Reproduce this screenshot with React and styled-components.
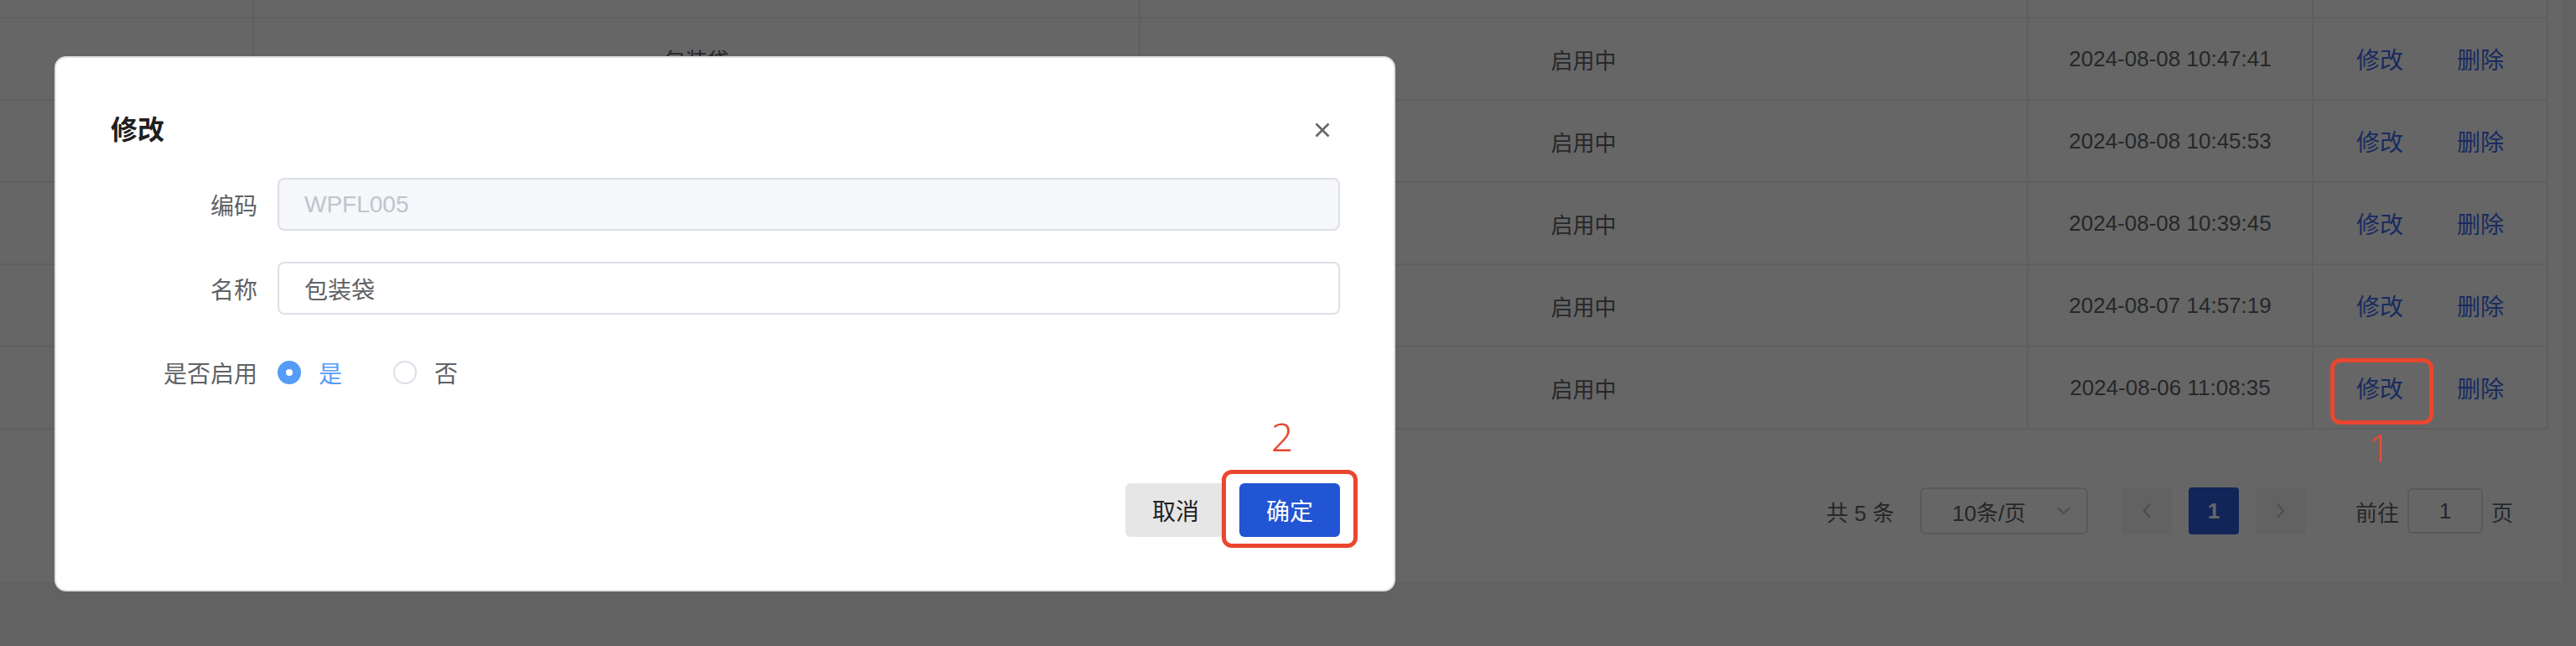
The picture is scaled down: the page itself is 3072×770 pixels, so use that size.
import React from 'react'
import styled, { createGlobalStyle } from 'styled-components'

const GlobalStyle = createGlobalStyle`
  html, body {
    margin: 0;
    padding: 0;
  }
  body {
    width: 3072px;
    height: 770px;
    overflow: hidden;
    background: #f5f5f5;
    font-family: "Liberation Sans", "Noto Sans CJK SC", sans-serif;
  }
`

const columns = [303, 1057, 1059, 340, 280]

const rows = [
    { name: '包装袋', status: '启用中', time: '2024-08-08 10:47:41' },
    { name: '纸箱', status: '启用中', time: '2024-08-08 10:45:53' },
    { name: '托盘', status: '启用中', time: '2024-08-08 10:39:45' },
    { name: '缠绕膜', status: '启用中', time: '2024-08-07 14:57:19' },
    { name: '标签', status: '启用中', time: '2024-08-06 11:08:35' },
]

function App() {
    return (
        <Page>
            <GlobalStyle />
            <Card>
                <Table>
                    <HeadStrip>
                        {columns.map((w, i) => <Cell key={i} w={w} />)}
                    </HeadStrip>
                    {rows.map(row => (
                        <Row key={row.time}>
                            <Cell w={columns[0]} />
                            <Cell w={columns[1]}>{row.name}</Cell>
                            <Cell w={columns[2]}>{row.status}</Cell>
                            <Cell w={columns[3]}>{row.time}</Cell>
                            <Cell w={columns[4]}>
                                <Actions>
                                    <LinkBtn>修改</LinkBtn>
                                    <LinkBtn>删除</LinkBtn>
                                </Actions>
                            </Cell>
                        </Row>
                    ))}
                </Table>
                <Pager>
                    <Total>共 5 条</Total>
                    <SizeSelect>
                        <span>10条/页</span>
                        <svg width="18" height="12" viewBox="0 0 18 12">
                            <path d="M2 2 L9 9 L16 2" fill="none" stroke="#c0c4cc" strokeWidth="2" />
                        </svg>
                    </SizeSelect>
                    <PageNav>
                        <PageBtn>
                            <svg width="14" height="22" viewBox="0 0 14 22">
                                <path d="M11 3 L4 11 L11 19" fill="none" stroke="#c0c4cc" strokeWidth="2.4" />
                            </svg>
                        </PageBtn>
                        <PageBtn active>1</PageBtn>
                        <PageBtn>
                            <svg width="14" height="22" viewBox="0 0 14 22">
                                <path d="M3 3 L10 11 L3 19" fill="none" stroke="#c0c4cc" strokeWidth="2.4" />
                            </svg>
                        </PageBtn>
                    </PageNav>
                    <Jumper>
                        前往
                        <JumpInput>1</JumpInput>
                        页
                    </Jumper>
                </Pager>
            </Card>

            <Mask />

            <Dialog>
                <DialogHeader>
                    <DialogTitle>修改</DialogTitle>
                    <CloseBtn>
                        <svg width="18" height="18" viewBox="0 0 18 18">
                            <path d="M1.5 1.5 L16.5 16.5 M16.5 1.5 L1.5 16.5" stroke="#666" strokeWidth="2.6" />
                        </svg>
                    </CloseBtn>
                </DialogHeader>
                <DialogBody>
                    <FormRow>
                        <Label>编码</Label>
                        <Input disabled>WPFL005</Input>
                    </FormRow>
                    <FormRow>
                        <Label>名称</Label>
                        <Input>包装袋</Input>
                    </FormRow>
                    <FormRow>
                        <Label>是否启用</Label>
                        <RadioGroup>
                            <Radio>
                                <RadioDot checked />
                                <RadioText checked>是</RadioText>
                            </Radio>
                            <Radio>
                                <RadioDot />
                                <RadioText>否</RadioText>
                            </Radio>
                        </RadioGroup>
                    </FormRow>
                </DialogBody>
                <DialogFooter>
                    <Button>取消</Button>
                    <Button primary>确定</Button>
                </DialogFooter>
            </Dialog>

            <MarkBox style={{ left: 2779, top: 427, width: 123, height: 79 }} />
            <MarkNum style={{ left: 2824, top: 510 }}>1</MarkNum>
            <MarkBox style={{ left: 1457, top: 560, width: 162, height: 93 }} />
            <MarkNum style={{ left: 1516, top: 497 }}>2</MarkNum>
        </Page>
    )
}

export default App

const Page = styled.div`
    position: relative;
    width: 3072px;
    height: 770px;
    overflow: hidden;
    background: #f5f5f5;
`

const Card = styled.div`
    width: 3056px;
    background: #fff;
    padding-bottom: 56px;
`

const Table = styled.div`
    width: 3039px;
    color: #606266;
    font-size: 26px;
`

const HeadStrip = styled.div`
    display: flex;
    height: 20px;
    border-bottom: 2px solid #ebeef5;
`

const Row = styled.div`
    display: flex;
    height: 96px;
    border-bottom: 2px solid #ebeef5;
`

const Cell = styled.div`
    width: ${props => props.w}px;
    flex: none;
    box-sizing: border-box;
    border-right: 2px solid #ebeef5;
    display: flex;
    align-items: center;
    justify-content: center;
    white-space: nowrap;
`

const Actions = styled.div`
    display: flex;
    gap: 64px;
`

const LinkBtn = styled.span`
    font-size: 28px;
    color: #3d6cf0;
`

const Pager = styled.div`
    width: 3039px;
    margin-top: 69px;
    height: 56px;
    box-sizing: border-box;
    padding-right: 42px;
    display: flex;
    justify-content: flex-end;
    align-items: center;
    font-size: 26px;
    color: #606266;
`

const Total = styled.span`
    margin-right: 31px;
`

const SizeSelect = styled.div`
    width: 200px;
    height: 56px;
    box-sizing: border-box;
    border: 2px solid #dcdfe6;
    border-radius: 6px;
    display: flex;
    align-items: center;
    justify-content: space-between;
    padding: 0 18px 0 36px;
    margin-right: 40px;
`

const PageNav = styled.div`
    display: flex;
    gap: 20px;
    margin-right: 59px;
`

const PageBtn = styled.div`
    width: 60px;
    height: 56px;
    border-radius: 4px;
    display: flex;
    align-items: center;
    justify-content: center;
    background: ${props => props.active ? '#2f5edf' : '#f4f4f5'};
    color: #fff;
    font-weight: bold;
`

const Jumper = styled.div`
    display: flex;
    align-items: center;
    gap: 10px;
`

const JumpInput = styled.div`
    width: 90px;
    height: 54px;
    box-sizing: border-box;
    border: 2px solid #dcdfe6;
    border-radius: 6px;
    display: flex;
    align-items: center;
    justify-content: center;
`

const Mask = styled.div`
    position: absolute;
    inset: 0;
    background: rgba(0, 0, 0, 0.6);
`

const Dialog = styled.div`
    position: absolute;
    left: 65px;
    top: 67px;
    width: 1599px;
    box-sizing: border-box;
    background: #fff;
    border: 2px solid #e2e2e2;
    border-radius: 14px;
`

const DialogHeader = styled.div`
    display: flex;
    align-items: center;
    justify-content: space-between;
    padding: 62px 76px 0 65px;
`

const DialogTitle = styled.div`
    font-size: 32px;
    line-height: 48px;
    font-weight: bold;
    color: #1f1f1f;
`

const CloseBtn = styled.div`
    width: 18px;
    height: 18px;
    display: flex;
`

const DialogBody = styled.div`
    padding: 33px 64px 0 64px;
`

const FormRow = styled.div`
    display: flex;
    align-items: center;
    height: 63px;
    margin-bottom: 37px;
`

const Label = styled.div`
    width: 200px;
    flex: none;
    box-sizing: border-box;
    padding-right: 24px;
    text-align: right;
    font-size: 28px;
    color: #606266;
`

const Input = styled.div`
    flex: 1;
    height: 63px;
    box-sizing: border-box;
    border: 2px solid #dcdfe6;
    border-radius: 8px;
    padding: 0 30px;
    display: flex;
    align-items: center;
    font-size: 28px;
    background: ${props => props.disabled ? '#f5f7fa' : '#fff'};
    color: ${props => props.disabled ? '#c0c4cc' : '#606266'};
`

const RadioGroup = styled.div`
    display: flex;
    align-items: center;
    gap: 61px;
`

const Radio = styled.div`
    display: flex;
    align-items: center;
    gap: 21px;
`

const RadioDot = styled.span`
    width: 28px;
    height: 28px;
    box-sizing: border-box;
    border-radius: 50%;
    border: 2px solid ${props => props.checked ? '#559cf8' : '#dcdfe6'};
    background: ${props => props.checked ? '#559cf8' : '#fff'};
    display: flex;
    align-items: center;
    justify-content: center;
    &::after {
        content: '';
        width: 8px;
        height: 8px;
        border-radius: 50%;
        background: #fff;
        display: ${props => props.checked ? 'block' : 'none'};
    }
`

const RadioText = styled.span`
    font-size: 28px;
    color: ${props => props.checked ? '#559cf8' : '#606266'};
`

const DialogFooter = styled.div`
    display: flex;
    justify-content: flex-end;
    gap: 16px;
    padding: 64px 64px 63px 0;
`

const Button = styled.div`
    width: 120px;
    height: 64px;
    border-radius: 6px;
    display: flex;
    align-items: center;
    justify-content: center;
    font-size: 28px;
    background: ${props => props.primary ? '#2255d4' : '#e6e6e6'};
    color: ${props => props.primary ? '#fff' : '#222'};
`

const MarkBox = styled.div`
    position: absolute;
    box-sizing: border-box;
    border: 5px solid #ea4630;
    border-radius: 12px;
`

const MarkNum = styled.div`
    position: absolute;
    font-family: "Noto Sans", sans-serif;
    font-weight: 300;
    font-size: 46px;
    line-height: 1;
    color: #ea4630;
`
